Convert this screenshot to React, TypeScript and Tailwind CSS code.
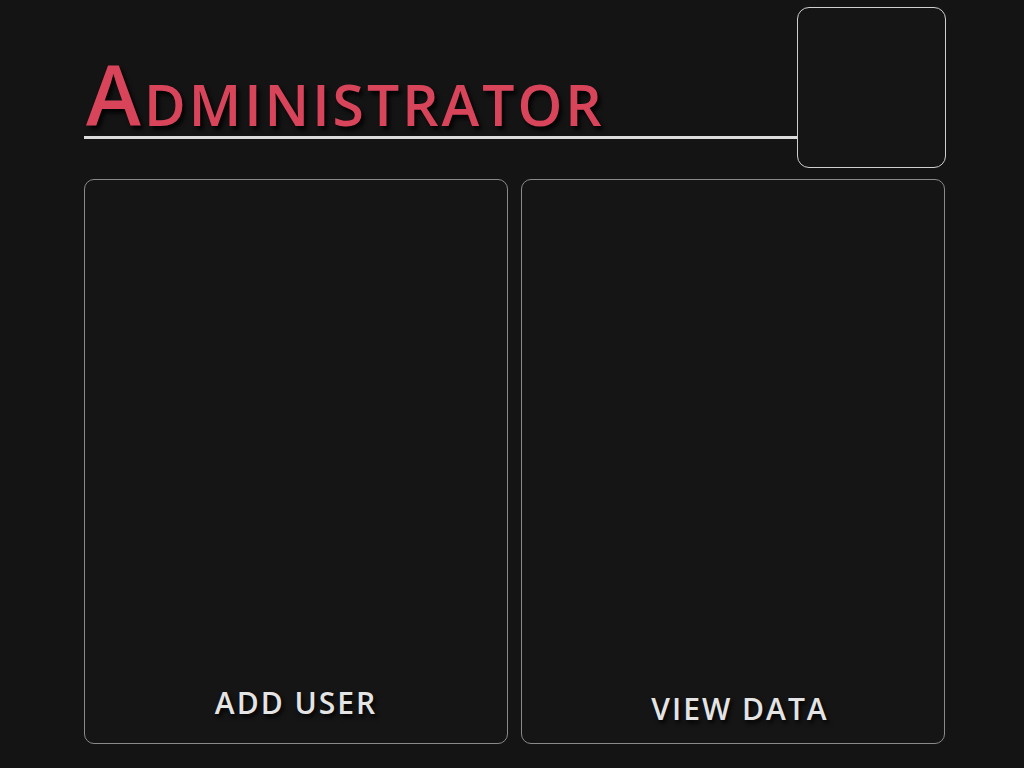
import React from 'react';

const Panel: React.FC<{ label: string; pad: string; shift?: string }> = ({ label, pad, shift = '' }) => {
  return (
    <div className={`h-[565px] rounded-[10px] border border-[#8a8a8a] bg-[#151515] flex flex-col justify-end items-center ${pad}`}>
      <span className={`text-[30px] font-semibold text-[#e4e4e4] tracking-[2px] [text-shadow:2px_3px_4px_rgba(0,0,0,0.9)] ${shift}`}>
        {label}
      </span>
    </div>
  );
};

const App: React.FC = () => {
  return (
    <div
      className="min-h-[768px] w-full bg-[#141414] pl-[84px] pr-[78px] pt-[7px]"
      style={{ fontFamily: "'Open Sans', 'Noto Sans', sans-serif" }}
    >
      {/* Header */}
      <div className="flex items-start">
        <div className="flex-1 mt-[45px] border-b-[3px] border-[#dcdcdc]">
          <h1 className="pl-[2px] leading-none text-[#d8445a] font-semibold tracking-[3px] [text-shadow:3px_4px_4px_rgba(0,0,0,0.85)] pb-[1px]">
            <span className="text-[83px] leading-none">A</span>
            <span className="text-[57px] leading-none">DMINISTRATOR</span>
          </h1>
        </div>
        <div className="w-[149px] h-[161px] rounded-[12px] border border-[#cfcfcf] bg-[#151515]" />
      </div>

      {/* Panels */}
      <div className="grid grid-cols-2 gap-[13px] mt-[11px] pr-[1px]">
        <Panel label="ADD USER" pad="pb-[18px]" />
        <Panel label="VIEW DATA" pad="pb-[12px]" shift="ml-[14px]" />
      </div>
    </div>
  );
};

export default App;
